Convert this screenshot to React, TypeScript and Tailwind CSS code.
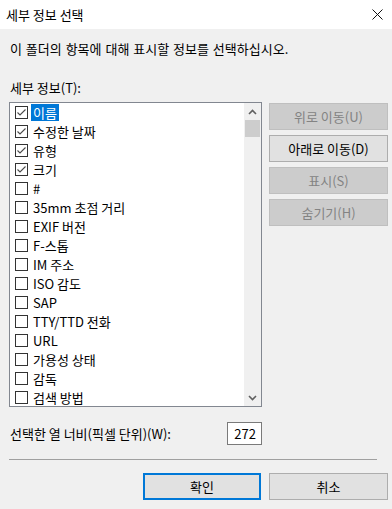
import React from "react";

type TItem = { label: string; checked: boolean };

const items: TItem[] = [
  { label: "이름", checked: true },
  { label: "수정한 날짜", checked: true },
  { label: "유형", checked: true },
  { label: "크기", checked: true },
  { label: "#", checked: false },
  { label: "35mm 초점 거리", checked: false },
  { label: "EXIF 버전", checked: false },
  { label: "F-스톱", checked: false },
  { label: "IM 주소", checked: false },
  { label: "ISO 감도", checked: false },
  { label: "SAP", checked: false },
  { label: "TTY/TTD 전화", checked: false },
  { label: "URL", checked: false },
  { label: "가용성 상태", checked: false },
  { label: "감독", checked: false },
  { label: "검색 방법", checked: false },
];

const CheckBox = ({ checked }: { checked: boolean }) => (
  <div className="w-[13px] h-[13px] border border-[#333333] bg-white shrink-0">
    {checked && (
      <svg width="11" height="11" viewBox="0 0 11 11" fill="none">
        <path d="M1.5 5.5 L4 8 L9.5 2.5" stroke="#4a4a4a" strokeWidth="1.1" />
      </svg>
    )}
  </div>
);

const SideButton = ({ label, disabled }: { label: string; disabled?: boolean }) => (
  <div
    className={
      disabled
        ? "w-[119px] h-[27px] flex items-center justify-center bg-[#cccccc] border border-[#bfbfbf] text-[#838383]"
        : "w-[119px] h-[27px] flex items-center justify-center bg-[#e1e1e1] border border-[#adadad] text-black"
    }
  >
    {label}
  </div>
);

const App = () => {
  return (
    <div className="w-[392px] h-[509px] bg-[#f0f0f0] text-[13px] text-black font-['Noto_Sans_CJK_KR',sans-serif] overflow-hidden">
      <div className="h-[29px] bg-white flex items-center justify-between pl-[6px] pr-[9px]">
        <span className="leading-[16px]">세부 정보 선택</span>
        <svg width="11" height="11" viewBox="0 0 11 11">
          <path d="M0.5 0.5 L10.5 10.5 M10.5 0.5 L0.5 10.5" stroke="#111" strokeWidth="1" />
        </svg>
      </div>

      <div className="pl-[9px] pr-[4px]">
        <div className="mt-[12px] h-[16px] leading-[16px] pl-[1px] [word-spacing:1px]">
          이 폴더의 항목에 대해 표시할 정보를 선택하십시오.
        </div>
        <div className="mt-[23px] h-[16px] leading-[16px] pl-[1px]">세부 정보(T):</div>

        <div className="mt-[6px] flex gap-[7px]">
          <div className="w-[253px] h-[305px] border border-[#828790] bg-white flex overflow-hidden">
            <div className="flex-1 overflow-hidden">
              {items.map((item, i) => (
                <div key={item.label} className="h-[19px] flex items-center pl-[5px]">
                  <CheckBox checked={item.checked} />
                  <span
                    className={
                      i === 0
                        ? "ml-[3px] px-[2px] h-[17px] leading-[17px] bg-[#0078d7] text-white"
                        : "ml-[3px] px-[2px] h-[17px] leading-[17px]"
                    }
                  >
                    {item.label}
                  </span>
                </div>
              ))}
            </div>
            <div className="w-[17px] bg-[#f0f0f0] flex flex-col">
              <div className="h-[17px] flex items-center justify-center">
                <svg width="9" height="6" viewBox="0 0 9 6">
                  <path d="M1 5 L4.5 1.5 L8 5" stroke="#606060" strokeWidth="1.6" fill="none" />
                </svg>
              </div>
              <div className="mx-[1px] h-[17px] bg-[#cdcdcd]" />
              <div className="flex-1" />
              <div className="h-[17px] flex items-center justify-center">
                <svg width="9" height="6" viewBox="0 0 9 6">
                  <path d="M1 1 L4.5 4.5 L8 1" stroke="#606060" strokeWidth="1.6" fill="none" />
                </svg>
              </div>
            </div>
          </div>

          <div className="mt-[1px] flex flex-col gap-[5px]">
            <SideButton label="위로 이동(U)" disabled />
            <SideButton label="아래로 이동(D)" />
            <SideButton label="표시(S)" disabled />
            <SideButton label="숨기기(H)" disabled />
          </div>
        </div>

        <div className="mt-[15px] w-[253px] flex items-center justify-between">
          <span className="pl-[1px] leading-[16px]">선택한 열 너비(픽셀 단위)(W):</span>
          <div className="w-[35px] h-[23px] border border-[#7a7a7a] bg-white flex items-center justify-end pr-[5px]">
            272
          </div>
        </div>

        <div className="mt-[14px] w-[368px] h-px bg-[#a0a0a0]" />

        <div className="mt-[13px] flex justify-end gap-[8px]">
          <div className="w-[118px] h-[27px] flex items-center justify-center bg-[#e1e1e1] border-2 border-[#0078d7]">
            확인
          </div>
          <div className="w-[119px] h-[27px] flex items-center justify-center bg-[#e1e1e1] border border-[#adadad]">
            취소
          </div>
        </div>
      </div>
    </div>
  );
};

export default App;
